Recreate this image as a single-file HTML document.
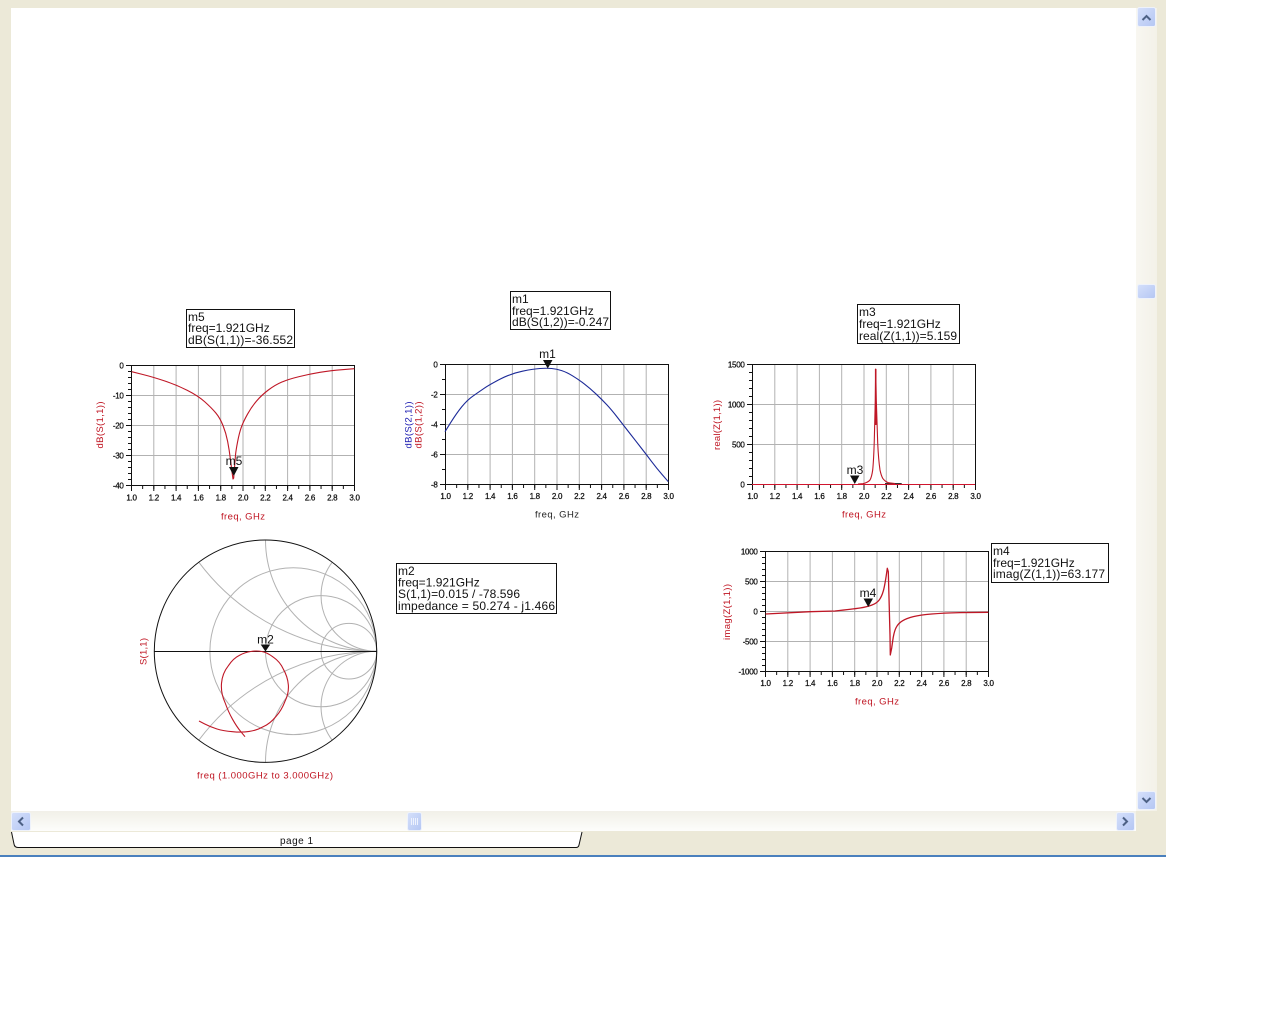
<!DOCTYPE html>
<html><head><meta charset="utf-8"><title>page 1</title>
<style>
html,body{margin:0;padding:0;background:#fff;width:1280px;height:1024px;overflow:hidden}
svg{display:block}
text{font-family:"Liberation Sans",sans-serif}
.t{font-size:8px;letter-spacing:-.3px;fill:#111;stroke:#111;stroke-width:.25}
.r{font-size:9.5px;fill:#bf1320}
.b{font-size:12px;fill:#111}
.g{stroke:#b2b2b2;fill:none;stroke-width:1}
.k{stroke:#111;fill:none}
.c{fill:none;stroke:#bf1726;stroke-width:1.1;stroke-linejoin:round}
.btn{fill:url(#bg);stroke:#eef2fb;stroke-width:1}
.chev{fill:none;stroke:#4d6185;stroke-width:2}
.box{fill:#fff;stroke:#111;stroke-width:1}
</style></head><body>
<svg width="1280" height="1024" viewBox="0 0 1280 1024" xmlns="http://www.w3.org/2000/svg">
<defs>
<linearGradient id="bg" x1="0" y1="0" x2="1" y2="1"><stop offset="0" stop-color="#d5e0fb"/><stop offset="1" stop-color="#b4c6f3"/></linearGradient>
<linearGradient id="vt" x1="0" y1="0" x2="1" y2="0"><stop offset="0" stop-color="#f8f7f1"/><stop offset="1" stop-color="#f3f1e8"/></linearGradient>
<linearGradient id="ht" x1="0" y1="0" x2="0" y2="1"><stop offset="0" stop-color="#f1f0e8"/><stop offset="1" stop-color="#fdfdfb"/></linearGradient>
</defs>

<rect x="0" y="0" width="1166" height="855" fill="#ece9d8"/>
<rect x="0" y="855" width="1166" height="2" fill="#4a80bd"/>
<rect x="11" y="8" width="1125" height="803" fill="#fff"/>
<rect x="1136" y="8" width="21" height="803" fill="url(#vt)"/>
<rect x="11" y="811" width="1125" height="20" fill="url(#ht)"/>

<!-- scrollbar buttons -->
<rect class="btn" x="1137.5" y="7.5" width="18" height="19" rx="2"/>
<path class="chev" d="M1142.5 20l4-4 4 4"/>
<rect class="btn" x="1137.5" y="284.5" width="18" height="14" rx="2"/>
<rect class="btn" x="1137.5" y="791.5" width="18" height="18" rx="2"/>
<path class="chev" d="M1142.5 798l4 4 4-4"/>
<rect class="btn" x="11.5" y="812.5" width="19" height="18" rx="2"/>
<path class="chev" d="M23 817.5l-4 4 4 4"/>
<rect class="btn" x="1116.5" y="812.5" width="18" height="18" rx="2"/>
<path class="chev" d="M1123 817.5l4 4-4 4"/>
<rect class="btn" x="407.5" y="812.5" width="14" height="18" rx="2"/>
<path d="M411.5 818v7M413.5 818v7M415.5 818v7M417.5 818v7" stroke="#eef2fd" stroke-width="1" fill="none"/>

<!-- tab -->
<path d="M11.5 832L14 844Q14.5 847.5 18 847.5H576Q578.5 847.5 579 845L582 832Z" fill="#fff"/>
<path d="M11.5 832L14 844Q14.5 847.5 18 847.5H576Q578.5 847.5 579 845L582 832" fill="none" stroke="#111" stroke-width="1"/>
<text x="296.5" y="844" text-anchor="middle" textLength="33" style="font-size:10px;fill:#111">page 1</text>

<!-- Plot 1 -->
<g transform="translate(131.5 365.5)">
<path class="g" d="M22.3 0v120M44.6 0v120M66.9 0v120M89.2 0v120M111.5 0v120M133.8 0v120M156.1 0v120M178.4 0v120M200.7 0v120M0 30H223M0 60H223M0 90H223"/>
<rect class="k" width="223" height="120"/>
<line class="k" x1="-.5" y1="122" x2="224" y2="122" stroke-width="3" stroke-dasharray="1 10.15"/>
<line class="k" x1="-.5" y1="123" x2="224" y2="123" stroke-width="5" stroke-dasharray="1 21.3"/>
<line class="k" x1="-2" y1="-.5" x2="-2" y2="121" stroke-width="3" stroke-dasharray="1 5"/>
<line class="k" x1="-3" y1="-.5" x2="-3" y2="121" stroke-width="5" stroke-dasharray="1 29"/>
<g class="t" text-anchor="middle"><text x="0" y="135">1.0</text><text x="22.3" y="135">1.2</text><text x="44.6" y="135">1.4</text><text x="66.9" y="135">1.6</text><text x="89.2" y="135">1.8</text><text x="111.5" y="135">2.0</text><text x="133.8" y="135">2.2</text><text x="156.1" y="135">2.4</text><text x="178.4" y="135">2.6</text><text x="200.7" y="135">2.8</text><text x="223" y="135">3.0</text></g>
<g class="t" text-anchor="end"><text x="-8" y="3">0</text><text x="-8" y="33">-10</text><text x="-8" y="63">-20</text><text x="-8" y="93">-30</text><text x="-8" y="123">-40</text></g>
<text class="r" x="111.5" y="154" text-anchor="middle" textLength="44">freq, GHz</text>
</g>
<text class="r" transform="translate(103 425) rotate(-90)" text-anchor="middle" textLength="47">dB(S(1,1))</text>
<path class="c" d="M131.7 371.7L142.35 374.35Q153 377 164.85 381Q176.7 385 187.35 390.35Q198 395.7 204.85 401.85Q211.7 408 215.85 413Q220 418 223 425.5Q226 433 227.65 441.5Q229.3 450 230.5 460Q231.7 470 233 479L233.7 478L235.5 455Q236 450 237.65 441.5Q239.3 433 241.3 427.35Q243.3 421.7 247.5 414.2Q251.7 406.7 256.7 400.85Q261.7 395 268.35 390Q275 385 281.65 382.15Q288.3 379.3 299.15 376.65Q310 374 320 372.35Q330 370.7 342.15 369.7L354.3 368.7"/>
<path d="M229 467h9.5l-4.75 9z" fill="#111"/>
<text class="b" x="234" y="465" text-anchor="middle">m5</text>
<rect class="box" x="186.5" y="309.5" width="108" height="38"/>
<text class="b" x="188" y="321">m5</text><text class="b" x="188" y="332">freq=1.921GHz</text><text class="b" x="188" y="344" textLength="105">dB(S(1,1))=-36.552</text>

<!-- Plot 2 -->
<g transform="translate(445.5 364.5)">
<path class="g" d="M22.3 0v120M44.6 0v120M66.9 0v120M89.2 0v120M111.5 0v120M133.8 0v120M156.1 0v120M178.4 0v120M200.7 0v120M0 30H223M0 60H223M0 90H223"/>
<rect class="k" width="223" height="120"/>
<line class="k" x1="-.5" y1="122" x2="224" y2="122" stroke-width="3" stroke-dasharray="1 10.15"/>
<line class="k" x1="-.5" y1="123" x2="224" y2="123" stroke-width="5" stroke-dasharray="1 21.3"/>
<line class="k" x1="-2" y1="-.5" x2="-2" y2="121" stroke-width="3" stroke-dasharray="1 14"/>
<line class="k" x1="-3" y1="-.5" x2="-3" y2="121" stroke-width="5" stroke-dasharray="1 29"/>
<g class="t" text-anchor="middle"><text x="0" y="134.5">1.0</text><text x="22.3" y="134.5">1.2</text><text x="44.6" y="134.5">1.4</text><text x="66.9" y="134.5">1.6</text><text x="89.2" y="134.5">1.8</text><text x="111.5" y="134.5">2.0</text><text x="133.8" y="134.5">2.2</text><text x="156.1" y="134.5">2.4</text><text x="178.4" y="134.5">2.6</text><text x="200.7" y="134.5">2.8</text><text x="223" y="134.5">3.0</text></g>
<g class="t" text-anchor="end"><text x="-8" y="3">0</text><text x="-8" y="33">-2</text><text x="-8" y="63">-4</text><text x="-8" y="93">-6</text><text x="-8" y="123">-8</text></g>
<text x="111.5" y="153" text-anchor="middle" textLength="44" style="font-size:9.5px;fill:#222">freq, GHz</text>
</g>
<text transform="translate(411.5 425) rotate(-90)" text-anchor="middle" textLength="47" style="font-size:9.5px;fill:#1a1ab0">dB(S(2,1))</text>
<text class="r" transform="translate(421.5 425) rotate(-90)" text-anchor="middle" textLength="47">dB(S(1,2))</text>
<path d="M445 431.7L450.85 422.35Q456.7 413 462 406.5Q467.3 400 472.8 396.15Q478.3 392.3 484.15 388.3Q490 384.3 500.85 378.8Q511.7 373.3 522.5 371.15Q533.3 369 540 368.5Q546.7 368 551.7 368.5Q556.7 369 561.7 370.65Q566.7 372.3 572.5 375.8Q578.3 379.3 584.15 383.8Q590 388.3 595.85 393.8Q601.7 399.3 606.7 404.65Q611.7 410 617.5 417.5Q623.3 425 629.15 432.5Q635 440 640.85 447.5Q646.7 455 651.7 461.65Q656.7 468.3 662.5 475L668.3 481.7" fill="none" stroke="#1c2a98" stroke-width="1.1"/>
<path d="M543 360h9.5l-4.75 8.5z" fill="#111"/>
<text class="b" x="547.5" y="358" text-anchor="middle">m1</text>
<rect class="box" x="510.5" y="291.5" width="100" height="38"/>
<text class="b" x="512" y="303">m1</text><text class="b" x="512" y="315">freq=1.921GHz</text><text class="b" x="512" y="326" textLength="97">dB(S(1,2))=-0.247</text>

<!-- Plot 3 -->
<g transform="translate(752.5 364.5)">
<path class="g" d="M22.3 0v120M44.6 0v120M66.9 0v120M89.2 0v120M111.5 0v120M133.8 0v120M156.1 0v120M178.4 0v120M200.7 0v120M0 40H223M0 80H223"/>
<rect class="k" width="223" height="120"/>
<line class="k" x1="-.5" y1="122" x2="224" y2="122" stroke-width="3" stroke-dasharray="1 10.15"/>
<line class="k" x1="-.5" y1="123" x2="224" y2="123" stroke-width="5" stroke-dasharray="1 21.3"/>
<line class="k" x1="-2" y1="-.5" x2="-2" y2="121" stroke-width="3" stroke-dasharray="1 7"/>
<line class="k" x1="-3" y1="-.5" x2="-3" y2="121" stroke-width="5" stroke-dasharray="1 39"/>
<g class="t" text-anchor="middle"><text x="0" y="134.5">1.0</text><text x="22.3" y="134.5">1.2</text><text x="44.6" y="134.5">1.4</text><text x="66.9" y="134.5">1.6</text><text x="89.2" y="134.5">1.8</text><text x="111.5" y="134.5">2.0</text><text x="133.8" y="134.5">2.2</text><text x="156.1" y="134.5">2.4</text><text x="178.4" y="134.5">2.6</text><text x="200.7" y="134.5">2.8</text><text x="223" y="134.5">3.0</text></g>
<g class="t" text-anchor="end"><text x="-8" y="3">1500</text><text x="-8" y="43">1000</text><text x="-8" y="83">500</text><text x="-8" y="123">0</text></g>
<text class="r" x="111.5" y="153" text-anchor="middle" textLength="44">freq, GHz</text>
</g>
<text class="r" transform="translate(720 425) rotate(-90)" text-anchor="middle" textLength="50">real(Z(1,1))</text>
<path d="M752 484.5H975" stroke="#d0152e" stroke-width="1" fill="none"/>
<path d="M885 483.5H901.7" stroke="#333" stroke-width="1" fill="none"/>
<path class="c" d="M858 484L863 483.7Q868 482.5 870 480Q871.7 477 872.7 470Q873.7 460 874.3 440L875.3 400L875.7 369L876.3 400L877.7 443Q878.5 460 880 470Q881 475 882.7 478.3Q885 481.5 888.3 482.7L895 483.5"/>
<path d="M875.7 369V425" stroke="#bf1726" stroke-width="1.6" fill="none"/>
<path d="M850 475.5h9.5l-4.75 8.5z" fill="#111"/>
<text class="b" x="855" y="474" text-anchor="middle">m3</text>
<rect class="box" x="857.5" y="304.5" width="102" height="39"/>
<text class="b" x="859" y="316">m3</text><text class="b" x="859" y="328">freq=1.921GHz</text><text class="b" x="859" y="340" textLength="98">real(Z(1,1))=5.159</text>

<!-- Plot 4 -->
<g transform="translate(765.5 551.5)">
<path class="g" d="M22.3 0v120M44.6 0v120M66.9 0v120M89.2 0v120M111.5 0v120M133.8 0v120M156.1 0v120M178.4 0v120M200.7 0v120M0 30H223M0 60H223M0 90H223"/>
<rect class="k" width="223" height="120"/>
<line class="k" x1="-.5" y1="122" x2="224" y2="122" stroke-width="3" stroke-dasharray="1 10.15"/>
<line class="k" x1="-.5" y1="123" x2="224" y2="123" stroke-width="5" stroke-dasharray="1 21.3"/>
<line class="k" x1="-2" y1="-.5" x2="-2" y2="121" stroke-width="3" stroke-dasharray="1 5"/>
<line class="k" x1="-3" y1="-.5" x2="-3" y2="121" stroke-width="5" stroke-dasharray="1 29"/>
<g class="t" text-anchor="middle"><text x="0" y="134.5">1.0</text><text x="22.3" y="134.5">1.2</text><text x="44.6" y="134.5">1.4</text><text x="66.9" y="134.5">1.6</text><text x="89.2" y="134.5">1.8</text><text x="111.5" y="134.5">2.0</text><text x="133.8" y="134.5">2.2</text><text x="156.1" y="134.5">2.4</text><text x="178.4" y="134.5">2.6</text><text x="200.7" y="134.5">2.8</text><text x="223" y="134.5">3.0</text></g>
<g class="t" text-anchor="end"><text x="-8" y="3">1000</text><text x="-8" y="33">500</text><text x="-8" y="63">0</text><text x="-8" y="93">-500</text><text x="-8" y="123">-1000</text></g>
<text class="r" x="111.5" y="153" text-anchor="middle" textLength="44">freq, GHz</text>
</g>
<text class="r" transform="translate(730 612) rotate(-90)" text-anchor="middle" textLength="56">imag(Z(1,1))</text>
<path class="c" style="stroke-width:1.3" d="M765.7 614L810 611.7L835 611Q853.3 609 860 608Q866.7 607 871.7 605.15Q876.7 603.3 879.2 600Q881.7 596.7 883.35 590.85Q885 585 887.3 568.3L888.3 571.7L890 635L890.3 655L891.7 648L892.85 639.85Q894 631.7 896.15 627.5Q898.3 623.3 902.5 620.8Q906.7 618.3 913.35 616.65Q920 615 931.65 614Q943.3 613 960 612.6L988.3 612.3"/>
<path d="M863.5 598.5h9.5l-4.75 8.5z" fill="#111"/>
<text class="b" x="868" y="597" text-anchor="middle">m4</text>
<rect class="box" x="991.5" y="543.5" width="117" height="39"/>
<text class="b" x="993" y="555">m4</text><text class="b" x="993" y="567">freq=1.921GHz</text><text class="b" x="993" y="578" textLength="112">imag(Z(1,1))=63.177</text>

<!-- Smith chart -->
<g class="g">
<circle cx="293.3" cy="651.2" r="83.4"/>
<circle cx="321.1" cy="651.2" r="55.6"/>
<circle cx="348.9" cy="651.2" r="27.8"/>
<path d="M265.5 540A111.2 111.2 0 0 0 376.7 651.2"/>
<path d="M265.5 762.4A111.2 111.2 0 0 1 376.7 651.2"/>
<path d="M198.8 562.2A222.4 222.4 0 0 0 376.7 651.2"/>
<path d="M198.8 740.2A222.4 222.4 0 0 1 376.7 651.2"/>
<path d="M332.2 562.2A55.6 55.6 0 0 0 376.7 651.2"/>
<path d="M332.2 740.2A55.6 55.6 0 0 1 376.7 651.2"/>
</g>
<circle cx="265.5" cy="651.2" r="111.2" class="k"/>
<path d="M154.3 651.5H376.7" class="k"/>
<path class="c" d="M245 736.7L240.85 731.7Q236.7 726.7 232.5 719.2Q228.3 711.7 225 702.5Q220.7 693.3 221.5 683.3Q222.3 673.3 228.3 665.8Q233.3 658.3 239.15 655.5Q245 652.2 250.85 651.5Q256.7 650.5 261.7 651.5Q266.7 652.2 273.35 657.2Q280 661.7 283.35 669.2Q287.7 676.7 288.35 685Q289 693.3 284.85 701.65Q281.7 710 275.85 716.65Q270 723.8 263.35 726.65Q256.7 730.5 249.2 731.4Q241.7 732.6 232.5 731.65Q223.3 731 216.65 728.85Q210 726.7 204.5 723.85L199 721"/>
<path d="M260.7 644.5h9.5l-4.75 7z" fill="#111"/>
<text class="b" x="265.5" y="643.5" text-anchor="middle">m2</text>
<text class="r" transform="translate(146.5 651.5) rotate(-90)" text-anchor="middle" textLength="27">S(1,1)</text>
<text class="r" x="265" y="778.5" text-anchor="middle" textLength="136">freq (1.000GHz to 3.000GHz)</text>
<rect class="box" x="396.5" y="563.5" width="160" height="50"/>
<text class="b" x="398" y="575">m2</text><text class="b" x="398" y="586.5">freq=1.921GHz</text><text class="b" x="398" y="598" textLength="122">S(1,1)=0.015 / -78.596</text><text class="b" x="398" y="610" textLength="157">impedance = 50.274 - j1.466</text>
</svg>
</body></html>
